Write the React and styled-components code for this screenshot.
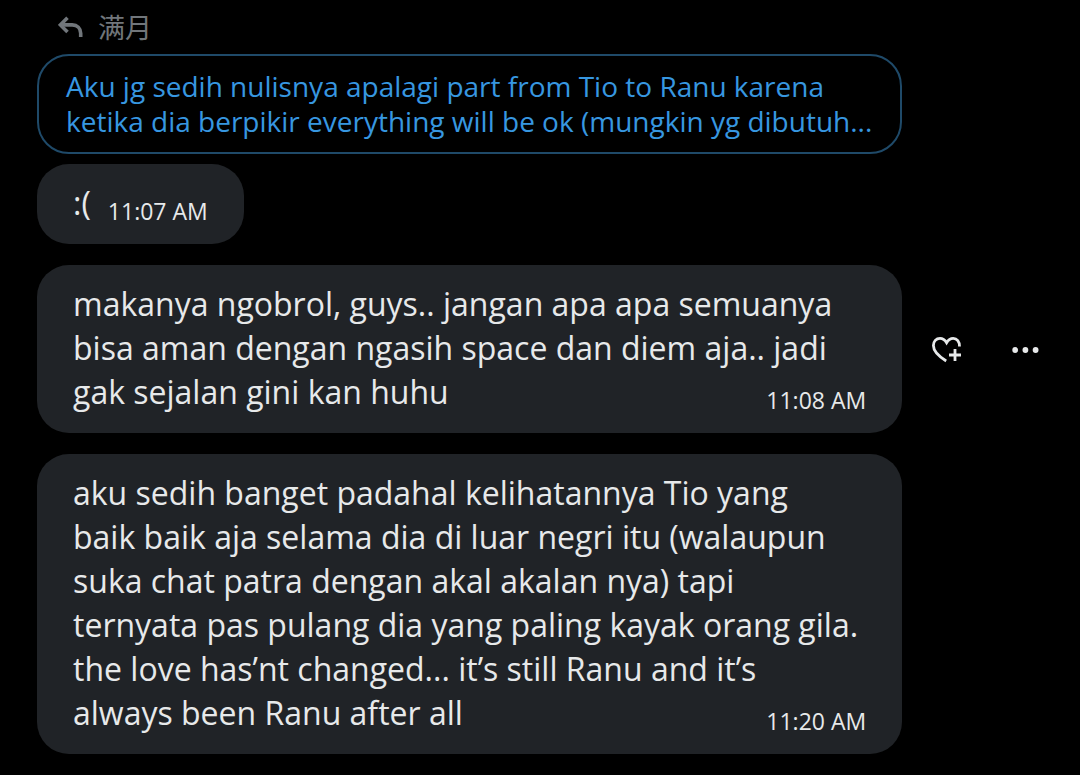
import React from 'react'
import styled, { createGlobalStyle } from 'styled-components'

const GlobalStyle = createGlobalStyle`
  body {
    margin: 0;
    background: #000;
    color: #e7e9ea;
    font-family: 'Open Sans', 'Noto Sans CJK SC', sans-serif;
  }
`

const Thread = styled('main')`
  display: flex;
  flex-direction: column;
  gap: 21px;
  padding: 4px 37px 21px;
`

const ReplyTo = styled('div')`
  display: flex;
  align-items: center;
  gap: 14px;
  height: 44px;
  padding-left: 21px;
  color: #71767b;
  font-size: 27px;
`

const Quote = styled('blockquote')`
  box-sizing: border-box;
  width: 86%;
  margin: 6px 0 10px;
  padding: 13px 27px;
  border: 2px solid #1f4a69;
  border-radius: 32px;
  color: #3797e0;
  font-size: 28px;
  line-height: 35px;
  white-space: nowrap;
`

const Row = styled('div')`
  display: flex;
  align-items: center;
`

const Bubble = styled('div')`
  box-sizing: border-box;
  display: flex;
  flex: ${props => (props.$short ? 'none' : '0 0 86%')};
  flex-direction: ${props => (props.$short ? 'row' : 'column')};
  align-items: ${props => (props.$short ? 'flex-end' : 'stretch')};
  gap: ${props => (props.$short ? '17px' : '0')};
  padding: 17px 36px 19px;
  border-radius: 32px;
  background: #202327;
`

const Message = styled('p')`
  margin: 0;
  font-size: 32px;
  line-height: 44px;
  white-space: nowrap;
`

/* in a long bubble the time shares the last line of the message */
const Time = styled('time')`
  align-self: flex-end;
  margin-top: ${props => (props.$lastLine ? '-28px' : '0')};
  font-size: 23px;
  line-height: 28px;
  white-space: nowrap;
`

const Actions = styled('div')`
  display: flex;
  flex: 1;
  align-items: center;
  justify-content: space-between;
  padding: 2px 4px 0 30px;
`

const IconButton = styled('button')`
  display: flex;
  padding: 0;
  border: 0;
  background: none;
  color: #e7e9ea;
  cursor: pointer;
`

const ReplyIcon = () => (
  <svg width="26" height="24" viewBox="0 0 26 24" fill="none" stroke="currentColor" strokeWidth="3.6" aria-hidden="true">
    <path d="M9.5 3.8L2.4 10.9l7.1 7.1" />
    <path d="M3 10.9h11.2c5 0 8.5 3.4 8.5 8.4V23" />
  </svg>
)

const HeartPlusIcon = () => (
  <svg width="30" height="28" viewBox="0 0 30 28" fill="none" stroke="currentColor" strokeWidth="2.8" aria-hidden="true">
    <path d="M27.5 10.5C27.7 5.4 24.9 2.4 21.2 2.4c-2.7 0-4.9 1.5-6.6 4.3C12.9 3.9 10.7 2.4 8 2.4c-3.8 0-6.6 3-6.6 7.2C1.4 15 6 20 14.2 25" />
    <path d="M23 13v12M17 19h12" />
  </svg>
)

const MoreIcon = () => (
  <svg width="27" height="8" viewBox="0 0 27 8" fill="currentColor" aria-hidden="true">
    <circle cx="3.2" cy="4" r="2.9" />
    <circle cx="13.4" cy="4" r="2.9" />
    <circle cx="23.6" cy="4" r="2.9" />
  </svg>
)

const App = () => (
  <Thread>
    <GlobalStyle />
    <div>
      <ReplyTo>
        <ReplyIcon />
        满月
      </ReplyTo>
      <Quote>
        Aku jg sedih nulisnya apalagi part from Tio to Ranu karena<br />
        ketika dia berpikir everything will be ok (mungkin yg dibutuh...
      </Quote>
      <Row>
        <Bubble $short>
          <Message>:(</Message>
          <Time>11:07 AM</Time>
        </Bubble>
      </Row>
    </div>
    <Row>
      <Bubble>
        <Message>
          makanya ngobrol, guys.. jangan apa apa semuanya<br />
          bisa aman dengan ngasih space dan diem aja.. jadi<br />
          gak sejalan gini kan huhu
        </Message>
        <Time $lastLine>11:08 AM</Time>
      </Bubble>
      <Actions>
        <IconButton type="button" aria-label="Add reaction">
          <HeartPlusIcon />
        </IconButton>
        <IconButton type="button" aria-label="More">
          <MoreIcon />
        </IconButton>
      </Actions>
    </Row>
    <Row>
      <Bubble>
        <Message>
          aku sedih banget padahal kelihatannya Tio yang<br />
          baik baik aja selama dia di luar negri itu (walaupun<br />
          suka chat patra dengan akal akalan nya) tapi<br />
          ternyata pas pulang dia yang paling kayak orang gila.<br />
          the love has’nt changed... it’s still Ranu and it’s<br />
          always been Ranu after all
        </Message>
        <Time $lastLine>11:20 AM</Time>
      </Bubble>
    </Row>
  </Thread>
)

export default App
